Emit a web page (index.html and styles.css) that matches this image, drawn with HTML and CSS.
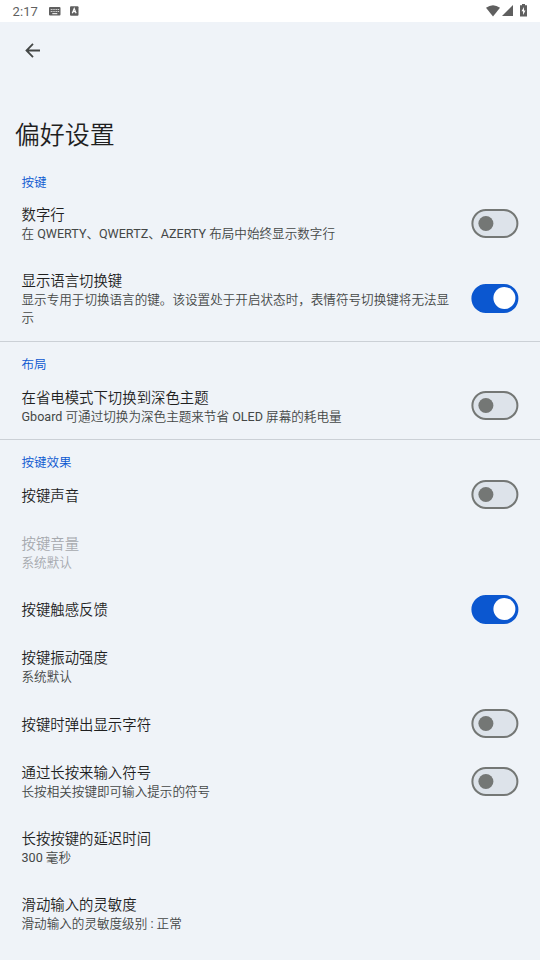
FILE: index.html
```html
<!DOCTYPE html>
<html lang="zh-CN">
<head>
<meta charset="utf-8">
<title>偏好设置</title>
<link rel="stylesheet" href="styles.css">
</head>
<body>
<header class="status">
  <span class="clock">2:17</span>
  <svg class="kbd" width="12" height="9" viewBox="0 0 12 9"><rect x="0" y="0" width="11.500" height="8.500" rx="1" fill="#5f5f5f"/><path d="M1.700 2.500h8.500M1.700 4.500h8.500" stroke="#d8d8d8" stroke-width="1.100" stroke-dasharray="1.200 .6"/><path d="M3.300 6.700h5" stroke="#fff"/></svg>
  <svg class="abox" width="9" height="10" viewBox="0 0 9 10"><rect x="0" y=".3" width="8.500" height="9.400" rx="1" fill="#5f5f5f"/><path d="M2.300 7.300 4.200 2.600 6.100 7.300M3 5.700h2.400" fill="none" stroke="#fff" stroke-width="1.200"/></svg>
  <svg class="sys" width="42" height="14" viewBox="0 0 42 14"><path d="M0 3.800Q7 -1.200 14 3.800L7 12.500Z" fill="#5f5f5f"/><path d="M27 1v11H16Z" fill="#5f5f5f"/><path d="M36 0h3v1.200H41v11.300h-7V1.200h2Z" fill="#5f5f5f"/><path d="M38 3 35.500 7.300h1.600V11L39.500 6.400H38Z" fill="#fff"/></svg>
</header>
<nav class="nav"><svg width="16" height="16" viewBox="0 0 16 16"><path d="M15 7.500H1.800M8 .9 1.500 7.500 8 14.100" fill="none" stroke="#444746" stroke-width="1.800"/></svg></nav>
<h1>偏好设置</h1>
<main>
<section class="keys">
  <h2>按键</h2>
  <div class="row two"><div class="text"><p class="title">数字行</p><p class="sub">在 QWERTY、QWERTZ、AZERTY 布局中始终显示数字行</p></div><i class="switch"></i></div>
  <div class="row three"><div class="text"><p class="title">显示语言切换键</p><p class="sub">显示专用于切换语言的键。该设置处于开启状态时，表情符号切换键将无法显示</p></div><i class="switch on"></i></div>
</section>
<section class="layout">
  <h2>布局</h2>
  <div class="row two"><div class="text"><p class="title">在省电模式下切换到深色主题</p><p class="sub">Gboard 可通过切换为深色主题来节省 OLED 屏幕的耗电量</p></div><i class="switch"></i></div>
</section>
<section class="effects">
  <h2>按键效果</h2>
  <div class="row one"><div class="text"><p class="title">按键声音</p></div><i class="switch"></i></div>
  <div class="row two disabled"><div class="text"><p class="title">按键音量</p><p class="sub">系统默认</p></div></div>
  <div class="row one"><div class="text"><p class="title">按键触感反馈</p></div><i class="switch on"></i></div>
  <div class="row two"><div class="text"><p class="title">按键振动强度</p><p class="sub">系统默认</p></div></div>
  <div class="row one"><div class="text"><p class="title">按键时弹出显示字符</p></div><i class="switch"></i></div>
  <div class="row two"><div class="text"><p class="title">通过长按来输入符号</p><p class="sub">长按相关按键即可输入提示的符号</p></div><i class="switch"></i></div>
  <div class="row two"><div class="text"><p class="title">长按按键的延迟时间</p><p class="sub">300 毫秒</p></div></div>
  <div class="row two"><div class="text"><p class="title">滑动输入的灵敏度</p><p class="sub">滑动输入的灵敏度级别 : 正常</p></div></div>
</section>
</main>
</body>
</html>
```
FILE: styles.css
```css
* { box-sizing: border-box; }
body { margin: 0; height: 960px; overflow: hidden; background: #eff3f8; color: #1f1f1f; font-family: Roboto, "Noto Sans CJK SC DemiLight", "Noto Sans CJK SC", sans-serif; }
h1, h2, p { margin: 0; font-weight: 400; }
svg { display: block; }
.status { height: 22px; background: #fff; display: flex; align-items: center; padding: 0 12px 0 12.500px; color: #5f5f5f; }
.clock { font-size: 13px; width: 36px; letter-spacing: .1px; }
.abox { margin-left: 9px; }
.sys { margin-left: auto; }
.nav { height: 91px; padding: 21px 0 0 24.500px; }
h1 { height: 44px; line-height: 45px; padding-left: 14.800px; font-size: 25px; }
h2 { height: 24px; padding-top: 7px; line-height: 18px; padding-left: 21.600px; font-size: 12.500px; color: #0b57d0; }
.keys { padding-top: 9px; height: 184px; }
.keys h2 { padding-top: 8px; }
.layout { padding-top: 7px; height: 98px; }
.layout h2 { height: 23px; }
.effects { padding-top: 7px; }
.effects h2 { height: 23.500px; }
section + section { border-top: 1px solid #cbd0d6; }
.row { display: flex; align-items: center; justify-content: space-between; padding: 0 22px 0 21.500px; }
.text { width: 432px; padding-top: 3px; }
.title { font-size: 14.400px; line-height: 19px; }
.sub { font-size: 12.580px; line-height: 18.500px; color: #444746; }
.two { height: 66px; }
.three { height: 84px; }
.one { height: 48.500px; }
.layout .text { padding-top: 5px; }
.disabled p { color: #a6a9ae; }
.switch { flex: none; width: 47px; height: 29px; border: 2px solid #747775; border-radius: 15px; background: #dde3ea; display: flex; align-items: center; padding-left: 5px; transform: translateX(.4px); }
.switch::before { content: ""; width: 15px; height: 15px; border-radius: 50%; background: #747775; }
.switch.on { border-color: #0b57d0; background: #0b57d0; padding-left: 20px; }
.switch.on::before { width: 22px; height: 22px; background: #fff; }
```
